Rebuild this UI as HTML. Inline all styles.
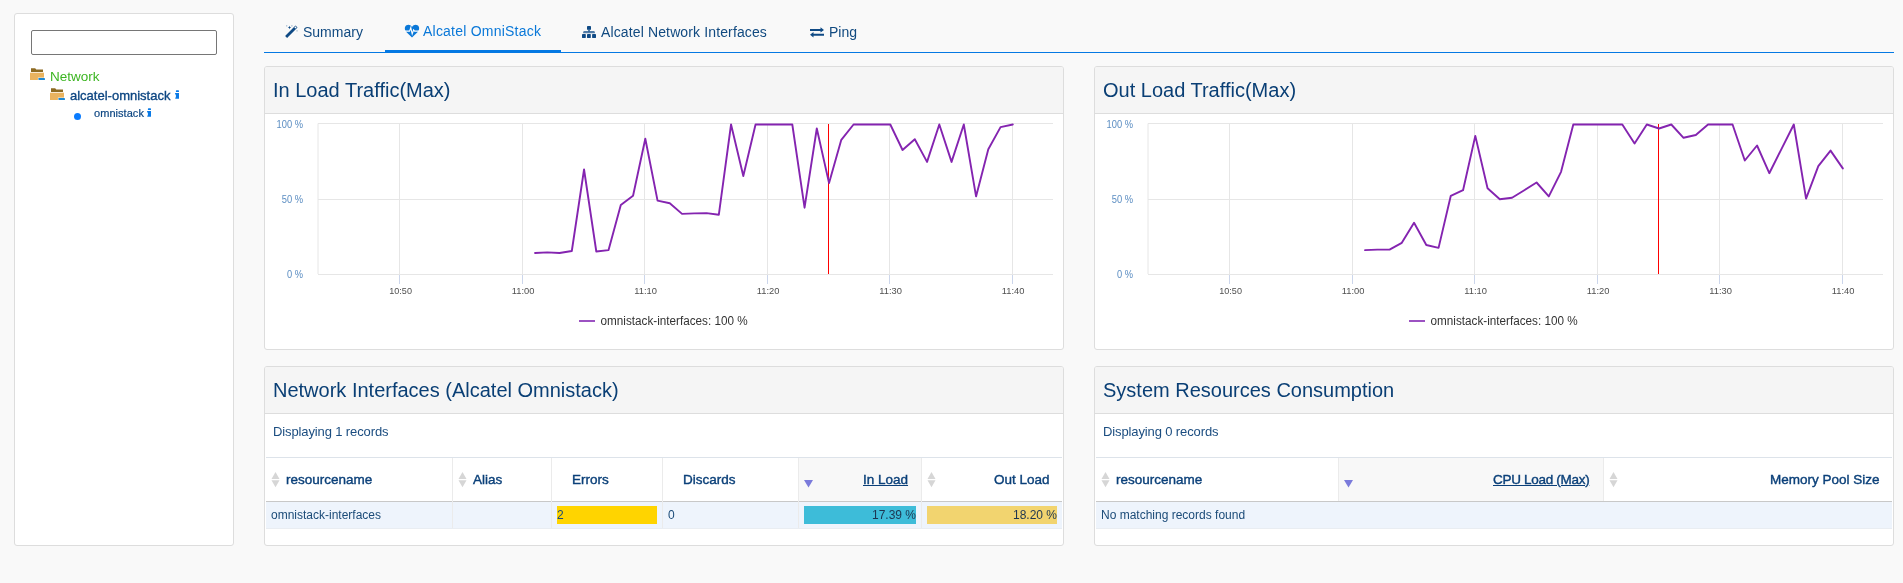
<!DOCTYPE html><html><head><meta charset="utf-8"><style>
*{box-sizing:border-box;margin:0;padding:0}
html,body{width:1903px;height:583px;overflow:hidden;background:#f9f9f9;font-family:"Liberation Sans",sans-serif}
.abs{position:absolute}
.t{position:absolute;white-space:pre;line-height:1;will-change:transform}
.panel{position:absolute;background:#fff;border:1px solid #dddddd;border-radius:3px}
.ph{position:absolute;left:0;top:0;right:0;background:#f5f5f5;border-bottom:1px solid #dddddd;border-radius:2px 2px 0 0}
.title{color:#0a3f75}
.tab{color:#114a80}
.hd{color:#0b4079;-webkit-text-stroke:0.4px #0b4079}
.cell{color:#1b4b78}
svg text{font-family:"Liberation Sans",sans-serif}
.xl{font-size:9.9px;fill:#505050}
.yl{font-size:10.2px;fill:#5b8dc2}
.lg{font-size:12px;fill:#333}
</style></head><body>
<div class="panel" style="left:14px;top:13px;width:220px;height:533px"></div>
<div class="abs" style="left:31px;top:30px;width:186px;height:25px;border:1px solid #767676;border-radius:2px;background:#fff"></div>
<svg class="abs" style="left:30px;top:68px" width="16" height="13" viewBox="0 0 16 13">
<path d="M1 0.2 H5.2 L6.2 1.6 H13 V4.1 H1Z" fill="#8d6a22"/>
<rect x="0" y="4.7" width="14" height="7.3" fill="#e9b35f"/>
<rect x="7.9" y="9.6" width="7.6" height="3" fill="#fff"/>
<rect x="8.4" y="10" width="6.6" height="2" rx="0.4" fill="#1e88d2"/>
</svg>
<div class="t " style="left:50px;top:69.57px;font-size:13.5px;color:#3cb521">Network</div>
<svg class="abs" style="left:50px;top:88px" width="16" height="13" viewBox="0 0 16 13">
<path d="M1 0.2 H5.2 L6.2 1.6 H13 V4.1 H1Z" fill="#8d6a22"/>
<rect x="0" y="4.7" width="14" height="7.3" fill="#e9b35f"/>
<rect x="7.9" y="9.6" width="7.6" height="3" fill="#fff"/>
<rect x="8.4" y="10" width="6.6" height="2" rx="0.4" fill="#1e88d2"/>
</svg>
<div class="t " style="left:70px;top:89.00px;font-size:13px;color:#0d4682;-webkit-text-stroke:0.35px #0d4682">alcatel-omnistack</div>
<svg class="abs" style="left:175px;top:90px" width="5" height="9" viewBox="0 0 5 9"><rect x="0.9" y="0.2" width="3.1" height="1.9" rx="0.7" fill="#0a7ae6"/><path d="M0.1 3.1 H4 V8.8 H0.3 V7.6 L0.9 7.6 V4.4 H0.1Z" fill="#0a7ae6"/></svg>
<div class="abs" style="left:74px;top:112.5px;width:7px;height:7px;border-radius:50%;background:#0a7cff"></div>
<div class="t " style="left:93.6px;top:107.69px;font-size:11px;color:#0d4682;-webkit-text-stroke:0.2px #0d4682;letter-spacing:0.05px">omnistack</div>
<svg class="abs" style="left:147px;top:108px" width="5" height="9" viewBox="0 0 5 9"><rect x="0.9" y="0.2" width="3.1" height="1.9" rx="0.7" fill="#0a7ae6"/><path d="M0.1 3.1 H4 V8.8 H0.3 V7.6 L0.9 7.6 V4.4 H0.1Z" fill="#0a7ae6"/></svg>
<div class="abs" style="left:264px;top:52px;width:1630px;height:1px;background:#0579e3"></div>
<div class="abs" style="left:385px;top:50px;width:176px;height:3px;background:#0579e3"></div>
<svg class="abs" style="left:284px;top:24px" width="15" height="15" viewBox="0 0 15 15">
<path d="M1.1 11.9 L11.5 1.5 L13.5 3.5 L3.1 13.9Z" fill="#0f4a85"/>
<path d="M10.4 3.4 L11.5 2.3 L12.6 3.4 L11.5 4.5Z" fill="#ffffff"/>
<path d="M5.5 1.8 L6 3 L7.2 3.5 L6 4 L5.5 5.2 L5 4 L3.8 3.5 L5 3Z" fill="#0f4a85"/>
<rect x="2" y="1.2" width="1.3" height="1.3" fill="#a9bdd1"/><rect x="7.2" y="1.2" width="1.3" height="1.3" fill="#a9bdd1"/><rect x="12.4" y="6.2" width="1.3" height="1.3" fill="#a9bdd1"/>
</svg>
<div class="t tab" style="left:303px;top:25.15px;font-size:14px;">Summary</div>
<svg class="abs" style="left:404px;top:24px" width="16" height="14" viewBox="0 0 16 14">
<path d="M8 13.5 L2.3 7.9 C0.3 5.8 0.4 2.5 2.5 1.3 C4.3 0.3 6.6 0.8 8 2.9 C9.4 0.8 11.7 0.3 13.5 1.3 C15.6 2.5 15.7 5.8 13.7 7.9 Z" fill="#0a78d8"/>
<path d="M0 7.1 H5.6 L6.8 3.6 L8.2 10 L9.6 5.9 L10.6 7.1 H16" fill="none" stroke="#fff" stroke-width="1.1"/>
</svg>
<div class="t " style="left:423px;top:24.15px;font-size:14px;color:#0a78d8;letter-spacing:0.22px">Alcatel OmniStack</div>
<svg class="abs" style="left:582px;top:26px" width="14" height="12" viewBox="0 0 14 12">
<rect x="5" y="0" width="4" height="3.8" rx="0.4" fill="#0f4a85"/>
<rect x="6.3" y="3.5" width="1.4" height="2" fill="#0f4a85"/>
<path d="M1.2 7.2 V6.2 Q1.2 4.9 2.4 4.9 H11.6 Q12.8 4.9 12.8 6.2 V7.2Z" fill="#0f4a85" opacity="0.72"/>
<rect x="0" y="8" width="3.8" height="4" rx="0.4" fill="#0f4a85"/><rect x="5" y="8" width="3.8" height="4" rx="0.4" fill="#0f4a85"/><rect x="10.1" y="8" width="3.9" height="4" rx="0.4" fill="#0f4a85"/>
</svg>
<div class="t tab" style="left:601px;top:25.15px;font-size:14px;letter-spacing:0.13px">Alcatel Network Interfaces</div>
<svg class="abs" style="left:809px;top:26px" width="16" height="13" viewBox="0 0 16 13">
<path d="M1 2.9 H11.5 V1.2 L15 3.9 L11.5 6.6 V4.9 H1Z" fill="#0f4a85"/>
<path d="M15 7.8 H4.5 V6.1 L1 8.8 L4.5 11.5 V9.8 H15Z" fill="#0f4a85"/>
</svg>
<div class="t tab" style="left:828.5px;top:25.15px;font-size:14px;">Ping</div>
<div class="panel" style="left:264px;top:66px;width:800px;height:284px"><div class="ph" style="height:47px"></div></div>
<div class="panel" style="left:264px;top:366px;width:800px;height:180px"><div class="ph" style="height:47px"></div></div>
<div class="panel" style="left:1094px;top:66px;width:800px;height:284px"><div class="ph" style="height:47px"></div></div>
<div class="panel" style="left:1094px;top:366px;width:800px;height:180px"><div class="ph" style="height:47px"></div></div>
<div class="t title" style="left:273px;top:80.07px;font-size:20px;">In Load Traffic(Max)</div>
<div class="t title" style="left:1103px;top:80.07px;font-size:20px;">Out Load Traffic(Max)</div>
<div class="t title" style="left:273px;top:380.07px;font-size:20px;">Network Interfaces (Alcatel Omnistack)</div>
<div class="t title" style="left:1103px;top:380.07px;font-size:20px;">System Resources Consumption</div>
<svg class="abs" style="left:0;top:0" width="1903" height="583"><line x1="318" y1="123.5" x2="1053" y2="123.5" stroke="#e6e6e6" stroke-width="1"/><line x1="318" y1="199.5" x2="1053" y2="199.5" stroke="#e6e6e6" stroke-width="1"/><line x1="318" y1="123.5" x2="318" y2="274" stroke="#e6e6e6" stroke-width="1"/><line x1="399.5" y1="123" x2="399.5" y2="274" stroke="#e6e6e6" stroke-width="1"/><line x1="399.5" y1="274" x2="399.5" y2="284" stroke="#ccd6eb" stroke-width="1"/><text x="389.25" y="294" textLength="22.7" lengthAdjust="spacingAndGlyphs" class="xl">10:50</text><line x1="522.5" y1="123" x2="522.5" y2="274" stroke="#e6e6e6" stroke-width="1"/><line x1="522.5" y1="274" x2="522.5" y2="284" stroke="#ccd6eb" stroke-width="1"/><text x="511.75" y="294" textLength="22.7" lengthAdjust="spacingAndGlyphs" class="xl">11:00</text><line x1="644.5" y1="123" x2="644.5" y2="274" stroke="#e6e6e6" stroke-width="1"/><line x1="644.5" y1="274" x2="644.5" y2="284" stroke="#ccd6eb" stroke-width="1"/><text x="634.25" y="294" textLength="22.7" lengthAdjust="spacingAndGlyphs" class="xl">11:10</text><line x1="767.5" y1="123" x2="767.5" y2="274" stroke="#e6e6e6" stroke-width="1"/><line x1="767.5" y1="274" x2="767.5" y2="284" stroke="#ccd6eb" stroke-width="1"/><text x="756.75" y="294" textLength="22.7" lengthAdjust="spacingAndGlyphs" class="xl">11:20</text><line x1="889.5" y1="123" x2="889.5" y2="274" stroke="#e6e6e6" stroke-width="1"/><line x1="889.5" y1="274" x2="889.5" y2="284" stroke="#ccd6eb" stroke-width="1"/><text x="879.25" y="294" textLength="22.7" lengthAdjust="spacingAndGlyphs" class="xl">11:30</text><line x1="1012.5" y1="123" x2="1012.5" y2="274" stroke="#e6e6e6" stroke-width="1"/><line x1="1012.5" y1="274" x2="1012.5" y2="284" stroke="#ccd6eb" stroke-width="1"/><text x="1001.75" y="294" textLength="22.7" lengthAdjust="spacingAndGlyphs" class="xl">11:40</text><line x1="318" y1="274.5" x2="1053" y2="274.5" stroke="#e6e6e6" stroke-width="1"/><text x="276.6" y="128" textLength="26.4" lengthAdjust="spacingAndGlyphs" class="yl">100 %</text><text x="281.7" y="203" textLength="21.3" lengthAdjust="spacingAndGlyphs" class="yl">50 %</text><text x="287" y="278" textLength="16" lengthAdjust="spacingAndGlyphs" class="yl">0 %</text><line x1="828.5" y1="124" x2="828.5" y2="274" stroke="#ff0000" stroke-width="1"/><polyline points="535.05,253.00 547.30,252.40 559.55,253.00 571.80,251.00 584.05,169.50 596.30,251.50 608.55,250.10 620.80,204.90 633.05,195.80 645.30,138.70 657.55,200.60 669.80,203.20 682.05,213.90 694.30,213.40 706.55,213.10 718.80,214.80 731.05,124.50 743.30,176.00 755.55,124.50 767.80,124.50 780.05,124.50 792.30,124.50 804.55,207.70 816.80,128.50 829.05,183.10 841.30,139.80 853.55,124.50 865.80,124.50 878.05,124.50 890.30,124.50 902.55,150.00 914.80,139.20 927.05,161.90 939.30,124.50 951.55,161.90 963.80,124.50 976.05,196.40 988.30,149.20 1000.55,127.10 1012.80,124.50" fill="none" stroke="#8424b0" stroke-width="1.9" stroke-linejoin="round" stroke-linecap="round"/><line x1="579" y1="321" x2="595" y2="321" stroke="#9c52c2" stroke-width="2"/><text x="600.5" y="325" textLength="147.2" lengthAdjust="spacingAndGlyphs" class="lg">omnistack-interfaces: 100 %</text><line x1="1148" y1="123.5" x2="1883" y2="123.5" stroke="#e6e6e6" stroke-width="1"/><line x1="1148" y1="199.5" x2="1883" y2="199.5" stroke="#e6e6e6" stroke-width="1"/><line x1="1148" y1="123.5" x2="1148" y2="274" stroke="#e6e6e6" stroke-width="1"/><line x1="1229.5" y1="123" x2="1229.5" y2="274" stroke="#e6e6e6" stroke-width="1"/><line x1="1229.5" y1="274" x2="1229.5" y2="284" stroke="#ccd6eb" stroke-width="1"/><text x="1219.25" y="294" textLength="22.7" lengthAdjust="spacingAndGlyphs" class="xl">10:50</text><line x1="1352.5" y1="123" x2="1352.5" y2="274" stroke="#e6e6e6" stroke-width="1"/><line x1="1352.5" y1="274" x2="1352.5" y2="284" stroke="#ccd6eb" stroke-width="1"/><text x="1341.75" y="294" textLength="22.7" lengthAdjust="spacingAndGlyphs" class="xl">11:00</text><line x1="1474.5" y1="123" x2="1474.5" y2="274" stroke="#e6e6e6" stroke-width="1"/><line x1="1474.5" y1="274" x2="1474.5" y2="284" stroke="#ccd6eb" stroke-width="1"/><text x="1464.25" y="294" textLength="22.7" lengthAdjust="spacingAndGlyphs" class="xl">11:10</text><line x1="1597.5" y1="123" x2="1597.5" y2="274" stroke="#e6e6e6" stroke-width="1"/><line x1="1597.5" y1="274" x2="1597.5" y2="284" stroke="#ccd6eb" stroke-width="1"/><text x="1586.75" y="294" textLength="22.7" lengthAdjust="spacingAndGlyphs" class="xl">11:20</text><line x1="1719.5" y1="123" x2="1719.5" y2="274" stroke="#e6e6e6" stroke-width="1"/><line x1="1719.5" y1="274" x2="1719.5" y2="284" stroke="#ccd6eb" stroke-width="1"/><text x="1709.25" y="294" textLength="22.7" lengthAdjust="spacingAndGlyphs" class="xl">11:30</text><line x1="1842.5" y1="123" x2="1842.5" y2="274" stroke="#e6e6e6" stroke-width="1"/><line x1="1842.5" y1="274" x2="1842.5" y2="284" stroke="#ccd6eb" stroke-width="1"/><text x="1831.75" y="294" textLength="22.7" lengthAdjust="spacingAndGlyphs" class="xl">11:40</text><line x1="1148" y1="274.5" x2="1883" y2="274.5" stroke="#e6e6e6" stroke-width="1"/><text x="1106.6" y="128" textLength="26.4" lengthAdjust="spacingAndGlyphs" class="yl">100 %</text><text x="1111.7" y="203" textLength="21.3" lengthAdjust="spacingAndGlyphs" class="yl">50 %</text><text x="1117" y="278" textLength="16" lengthAdjust="spacingAndGlyphs" class="yl">0 %</text><line x1="1658.5" y1="124" x2="1658.5" y2="274" stroke="#ff0000" stroke-width="1"/><polyline points="1365.05,250.10 1377.30,249.60 1389.55,249.60 1401.80,242.80 1414.05,222.70 1426.30,245.00 1438.55,247.90 1450.80,195.80 1463.05,190.20 1475.30,135.90 1487.55,188.20 1499.80,199.20 1512.05,197.80 1524.30,190.20 1536.55,182.50 1548.80,196.40 1561.05,171.80 1573.30,124.50 1585.55,124.50 1597.80,124.50 1610.05,124.50 1622.30,124.50 1634.55,143.50 1646.80,124.50 1659.05,128.50 1671.30,124.50 1683.55,137.80 1695.80,135.00 1708.05,124.50 1720.30,124.50 1732.55,124.50 1744.80,160.50 1757.05,145.50 1769.30,173.20 1781.55,148.90 1793.80,124.50 1806.05,198.60 1818.30,166.10 1830.55,150.60 1842.80,168.40" fill="none" stroke="#8424b0" stroke-width="1.9" stroke-linejoin="round" stroke-linecap="round"/><line x1="1409" y1="321" x2="1425" y2="321" stroke="#9c52c2" stroke-width="2"/><text x="1430.5" y="325" textLength="147.2" lengthAdjust="spacingAndGlyphs" class="lg">omnistack-interfaces: 100 %</text></svg>
<div class="t cell" style="left:273px;top:425.00px;font-size:13px;color:#1b4d80;letter-spacing:-0.12px">Displaying 1 records</div>
<div class="t cell" style="left:1103px;top:425.00px;font-size:13px;color:#1b4d80;letter-spacing:-0.12px">Displaying 0 records</div>
<div class="abs" style="left:266px;top:457px;width:796px;height:1px;background:#dde3ea"></div>
<div class="abs" style="left:266px;top:501px;width:796px;height:1px;background:#c8c8c8"></div>
<div class="abs" style="left:266px;top:502px;width:796px;height:26px;background:#eef4fc"></div>
<div class="abs" style="left:266px;top:528px;width:796px;height:1px;background:#e9edf2"></div>
<div class="abs" style="left:1096px;top:457px;width:796px;height:1px;background:#dde3ea"></div>
<div class="abs" style="left:1096px;top:501px;width:796px;height:1px;background:#c8c8c8"></div>
<div class="abs" style="left:1096px;top:502px;width:796px;height:26px;background:#eef4fc"></div>
<div class="abs" style="left:1096px;top:528px;width:796px;height:1px;background:#e9edf2"></div>
<div class="abs" style="left:799px;top:458px;width:122px;height:43px;background:#f8f8f8"></div>
<div class="abs" style="left:1339px;top:458px;width:264px;height:43px;background:#f8f8f8"></div>
<div class="abs" style="left:452px;top:458px;width:1px;height:70px;background:#ebebeb"></div>
<div class="abs" style="left:551px;top:458px;width:1px;height:70px;background:#ebebeb"></div>
<div class="abs" style="left:662px;top:458px;width:1px;height:70px;background:#ebebeb"></div>
<div class="abs" style="left:798px;top:458px;width:1px;height:70px;background:#ebebeb"></div>
<div class="abs" style="left:921px;top:458px;width:1px;height:70px;background:#ebebeb"></div>
<div class="abs" style="left:1338px;top:458px;width:1px;height:43px;background:#ebebeb"></div>
<div class="abs" style="left:1603px;top:458px;width:1px;height:43px;background:#ebebeb"></div>
<svg class="abs" style="left:271px;top:472px" width="9" height="16" viewBox="0 0 9 16"><path d="M4.5 0 L8.5 7 L0.5 7Z M0.5 8.2 L8.5 8.2 L4.5 15.2Z" fill="#d6d6d6"/></svg>
<div class="t hd" style="left:286px;top:472.57px;font-size:13.5px;">resourcename</div>
<svg class="abs" style="left:458px;top:472px" width="9" height="16" viewBox="0 0 9 16"><path d="M4.5 0 L8.5 7 L0.5 7Z M0.5 8.2 L8.5 8.2 L4.5 15.2Z" fill="#d6d6d6"/></svg>
<div class="t hd" style="left:472.5px;top:472.57px;font-size:13.5px;">Alias</div>
<div class="t hd" style="left:572px;top:472.57px;font-size:13.5px;">Errors</div>
<div class="t hd" style="left:683px;top:472.57px;font-size:13.5px;">Discards</div>
<svg class="abs" style="left:804px;top:480px" width="9" height="8" viewBox="0 0 9 8"><path d="M0 0 L9 0 L4.5 7.5Z" fill="#7b7bdb"/></svg>
<div class="t hd" style="left:863px;top:472.57px;font-size:13.5px;text-decoration:underline">In Load</div>
<svg class="abs" style="left:927px;top:472px" width="9" height="16" viewBox="0 0 9 16"><path d="M4.5 0 L8.5 7 L0.5 7Z M0.5 8.2 L8.5 8.2 L4.5 15.2Z" fill="#d6d6d6"/></svg>
<div class="t hd" style="left:994px;top:472.57px;font-size:13.5px;">Out Load</div>
<div class="t cell" style="left:271px;top:508.84px;font-size:12px;">omnistack-interfaces</div>
<div class="abs" style="left:557px;top:506px;width:100px;height:18px;background:#ffd400"></div>
<div class="t cell" style="left:557px;top:508.84px;font-size:12px;">2</div>
<div class="t cell" style="left:668px;top:508.84px;font-size:12px;">0</div>
<div class="abs" style="left:804px;top:506px;width:112px;height:18px;background:#3dbcd9"></div>
<div class="t cell" style="left:804px;top:508.84px;font-size:12px;width:112px;text-align:right;color:#1d3550">17.39 %</div>
<div class="abs" style="left:927px;top:506px;width:130px;height:18px;background:#f2d46f"></div>
<div class="t cell" style="left:927px;top:508.84px;font-size:12px;width:130px;text-align:right;color:#1d3550">18.20 %</div>
<svg class="abs" style="left:1101px;top:472px" width="9" height="16" viewBox="0 0 9 16"><path d="M4.5 0 L8.5 7 L0.5 7Z M0.5 8.2 L8.5 8.2 L4.5 15.2Z" fill="#d6d6d6"/></svg>
<div class="t hd" style="left:1116px;top:472.57px;font-size:13.5px;">resourcename</div>
<svg class="abs" style="left:1344px;top:480px" width="9" height="8" viewBox="0 0 9 8"><path d="M0 0 L9 0 L4.5 7.5Z" fill="#7b7bdb"/></svg>
<div class="t hd" style="left:1492.5px;top:472.57px;font-size:13.5px;text-decoration:underline;letter-spacing:-0.3px">CPU Load (Max)</div>
<svg class="abs" style="left:1609px;top:472px" width="9" height="16" viewBox="0 0 9 16"><path d="M4.5 0 L8.5 7 L0.5 7Z M0.5 8.2 L8.5 8.2 L4.5 15.2Z" fill="#d6d6d6"/></svg>
<div class="t hd" style="left:1769.5px;top:472.57px;font-size:13.5px;">Memory Pool Size</div>
<div class="t cell" style="left:1101px;top:508.84px;font-size:12px;">No matching records found</div>
</body></html>
